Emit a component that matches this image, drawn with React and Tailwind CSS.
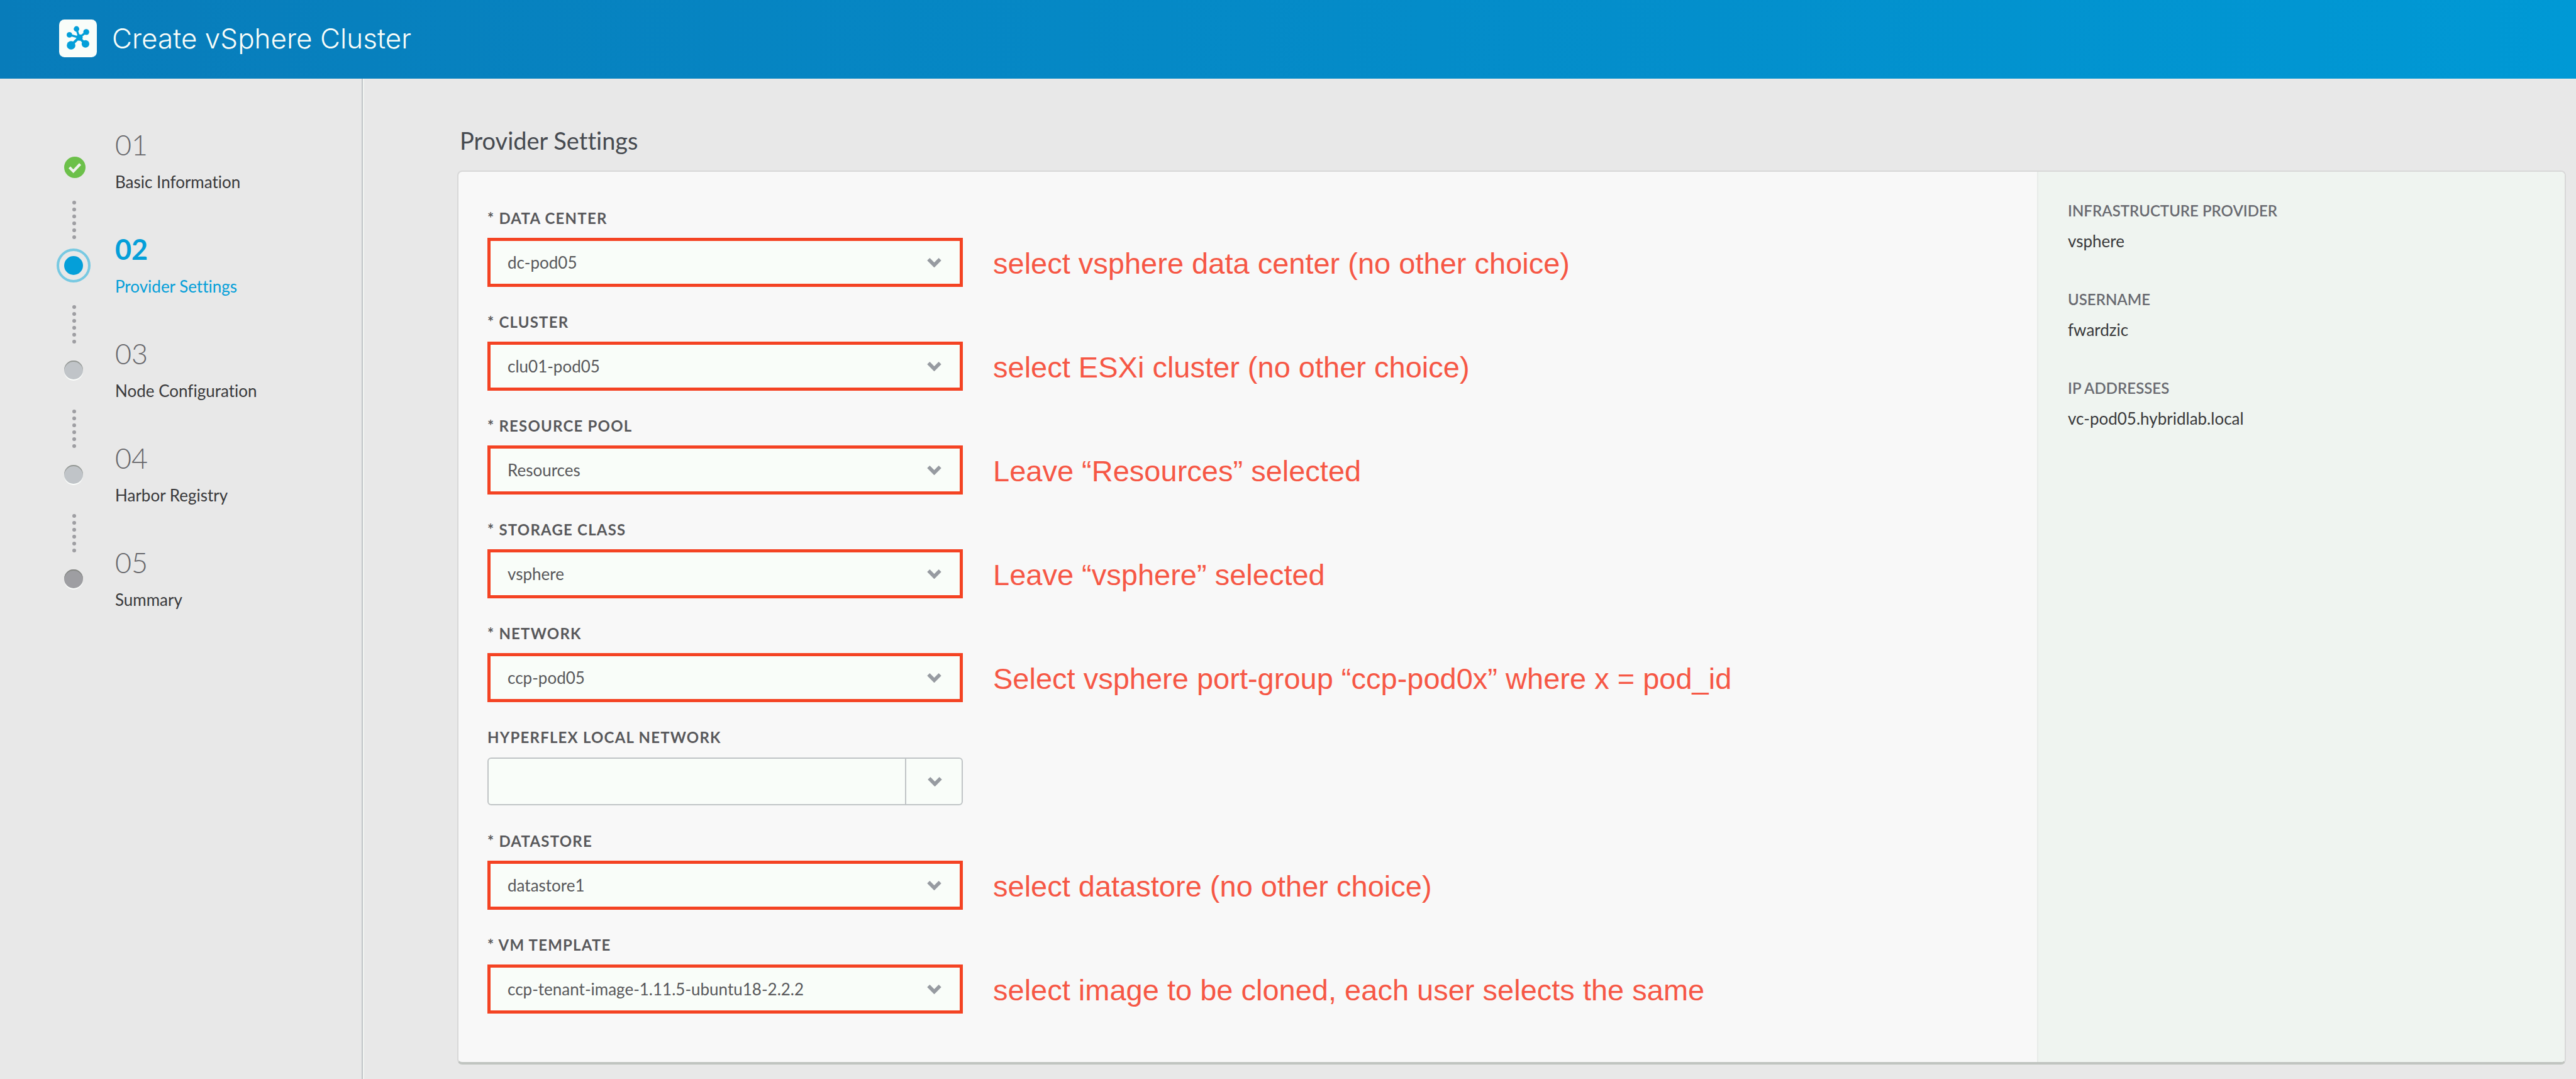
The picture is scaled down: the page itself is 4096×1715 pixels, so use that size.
const steps = [
  { number: "01", label: "Basic Information", state: "done" },
  { number: "02", label: "Provider Settings", state: "current" },
  { number: "03", label: "Node Configuration", state: "pending" },
  { number: "04", label: "Harbor Registry", state: "pending" },
  { number: "05", label: "Summary", state: "last" },
];

const fields = [
  { id: "data-center", label: "* DATA CENTER", value: "dc-pod05", note: "select vsphere data center (no other choice)" },
  { id: "cluster", label: "* CLUSTER", value: "clu01-pod05", note: "select ESXi cluster (no other choice)" },
  { id: "resource-pool", label: "* RESOURCE POOL", value: "Resources", note: "Leave “Resources” selected" },
  { id: "storage-class", label: "* STORAGE CLASS", value: "vsphere", note: "Leave “vsphere” selected" },
  { id: "network", label: "* NETWORK", value: "ccp-pod05", note: "Select vsphere port-group “ccp-pod0x” where x = pod_id" },
  { id: "hyperflex-network", label: "HYPERFLEX LOCAL NETWORK", value: "", note: "" },
  { id: "datastore", label: "* DATASTORE", value: "datastore1", note: "select datastore (no other choice)" },
  { id: "vm-template", label: "* VM TEMPLATE", value: "ccp-tenant-image-1.11.5-ubuntu18-2.2.2", note: "select image to be cloned, each user selects the same" },
];

const details = [
  { term: "INFRASTRUCTURE PROVIDER", value: "vsphere" },
  { term: "USERNAME", value: "fwardzic" },
  { term: "IP ADDRESSES", value: "vc-pod05.hybridlab.local" },
];

function ClusterLogo() {
  return (
    <svg viewBox="0 0 64 64" className="size-[60px] shrink-0" aria-hidden="true">
      <rect width="64" height="64" rx="9" fill="#f9fdf9" />
      <g fill="#049fd9" stroke="#049fd9">
        <path d="M34 30.500 29.500 16M34 30.500 46 21.500M34 30.500 17.500 26" strokeWidth="3.500" />
        <path d="M34 30.500 20.500 43.500M34 30.500 44.500 41.500" strokeWidth="4.500" />
        <circle cx="34.500" cy="30.500" r="5.500" stroke="none" />
        <circle cx="29.500" cy="16" r="4.700" stroke="none" />
        <circle cx="46" cy="21.200" r="5" stroke="none" />
        <circle cx="17.500" cy="26" r="4.700" stroke="none" />
        <circle cx="20.300" cy="43.700" r="7.300" stroke="none" />
        <circle cx="44.700" cy="41.300" r="6.500" stroke="none" />
      </g>
    </svg>
  );
}

function Chevron() {
  return (
    <svg viewBox="0 0 24 16" className="w-[23px] h-[15px]" aria-hidden="true">
      <path d="M2.200 2.200 12 12 21.800 2.200" fill="none" stroke="#979ba1" strokeWidth="6.200" />
    </svg>
  );
}

function Marker({ state }) {
  if (state === "done") {
    return (
      <div className="flex size-[54px] items-end justify-center pl-1">
        <svg viewBox="0 0 36 36" className="size-[34px]" aria-hidden="true">
          <circle cx="18" cy="18" r="18" fill="#6cc04a" />
          <path d="M9 18 15.500 24.500 27 12.500" fill="none" stroke="#f0f2ef" strokeWidth="4.500" />
        </svg>
      </div>
    );
  }
  if (state === "current") {
    return (
      <div className="flex size-[54px] items-center justify-center rounded-full border-4 border-[#77c9e2]">
        <div className="size-[30px] rounded-full bg-[#049fd9]" />
      </div>
    );
  }
  return (
    <div className="flex size-[54px] items-center justify-center">
      <div
        className={
          "size-[30px] rounded-full " +
          (state === "last"
            ? "bg-[#9e9ea2] shadow-[inset_0_2px_0_#858783,0_2px_0_#fbfdfb]"
            : "bg-[#c0c4c8] shadow-[inset_0_2px_0_#949894,0_2px_0_#fbfdfb]")
        }
      />
    </div>
  );
}

function Step({ step, isLast }) {
  const current = step.state === "current";
  return (
    <li className="flex h-[166px] items-start gap-[39px]" aria-current={current ? "step" : undefined}>
      <div className="flex flex-col items-center pt-[26px]">
        <Marker state={step.state} />
        {!isLast && (
          <div className="mt-9 flex flex-col gap-[5px] pl-[2px]">
            {[0, 1, 2, 3, 4, 5].map((dot) => (
              <span key={dot} className="size-[6px] rounded-full bg-[#9e9ea2]" />
            ))}
          </div>
        )}
      </div>
      <a href={"#step-" + step.number} className="flex flex-col gap-4">
        <span
          className={
            "text-[45px] leading-[54px] " + (current ? "font-bold text-[#049fd9]" : "font-light text-[#66666a]")
          }
        >
          {step.number}
        </span>
        <span className={"text-[26px] leading-8 " + (current ? "text-[#049fd9]" : "text-[#39393b]")}>
          {step.label}
        </span>
      </a>
    </li>
  );
}

function Field({ field }) {
  const annotated = field.note !== "";
  return (
    <div>
      <label
        htmlFor={field.id}
        className="mb-[15px] block text-[24px] leading-8 font-bold tracking-wider text-[#58585b]"
      >
        {field.label}
      </label>
      <div className="flex items-center gap-12">
        <div className="relative w-[756px] shrink-0">
          <select
            id={field.id}
            defaultValue={field.value}
            className={
              "block w-full appearance-none bg-[#f9fdf9] text-[26px] leading-8 text-[#58585b] " +
              (annotated
                ? "h-[78px] border-5 border-[#f44323] pr-[90px] pl-[27px]"
                : "my-px h-[76px] rounded-md border-2 border-[#c0c4c6] pr-[90px] pl-[30px]")
            }
          >
            <option value={field.value}>{field.value}</option>
          </select>
          <div
            className={
              "pointer-events-none absolute inset-y-[3px] right-0 flex w-[92px] items-center justify-center " +
              (annotated ? "" : "border-l-2 border-[#c0c4c6]")
            }
          >
            <Chevron />
          </div>
        </div>
        {annotated && (
          <p className="pt-1 font-['Liberation_Sans',Arial,sans-serif] text-[47px] leading-[54px] text-[#f65745]">
            {field.note}
          </p>
        )}
      </div>
    </div>
  );
}

export default function App() {
  return (
    <div className="flex min-h-screen flex-col bg-[#e8e8e8] font-['Lato',sans-serif] [font-variant-ligatures:none]">
      <header className="flex h-[125px] items-center gap-6 bg-linear-to-r from-[#087cba] to-[#0099d5] pb-1 pl-[94px]">
        <ClusterLogo />
        <h1 className="font-['Inter',sans-serif] text-[44px] leading-[56px] font-light text-[#f9fdf9]">
          Create vSphere Cluster
        </h1>
      </header>
      <div className="flex flex-1">
        <nav
          aria-label="Wizard steps"
          className="w-[577px] shrink-0 border-r-2 border-[#c0c4c8] pt-[78px] pl-[90px] shadow-[2px_0_0_#f1f4f1]"
        >
          <ol>
            {steps.map((step, index) => (
              <Step key={step.number} step={step} isLast={index === steps.length - 1} />
            ))}
          </ol>
        </nav>
        <main className="flex-1 pt-[74px] pr-4 pb-6 pl-[150px]">
          <h2 className="mb-6 pl-1 text-[38px] leading-[48px] text-[#464a50]">Provider Settings</h2>
          <div className="flex overflow-hidden rounded-lg border-2 border-b-4 border-[#d8d8d8] border-b-[#c0c4c0] bg-[#f8f8f8]">
            <form className="flex flex-1 flex-col gap-10 pt-[58px] pb-[77px] pl-[46px]">
              {fields.map((field) => (
                <Field key={field.id} field={field} />
              ))}
            </form>
            <aside className="w-[839px] shrink-0 border-l-2 border-[#e8ebe9] bg-[#eff4f0] pt-[46px] pl-[47px]">
              <dl className="flex flex-col gap-[61px]">
                {details.map((detail) => (
                  <div key={detail.term}>
                    <dt className="mb-4 text-[24px] leading-8 font-semibold text-[#696a70]">{detail.term}</dt>
                    <dd className="text-[26px] leading-8 text-[#39393b]">{detail.value}</dd>
                  </div>
                ))}
              </dl>
            </aside>
          </div>
        </main>
      </div>
    </div>
  );
}
